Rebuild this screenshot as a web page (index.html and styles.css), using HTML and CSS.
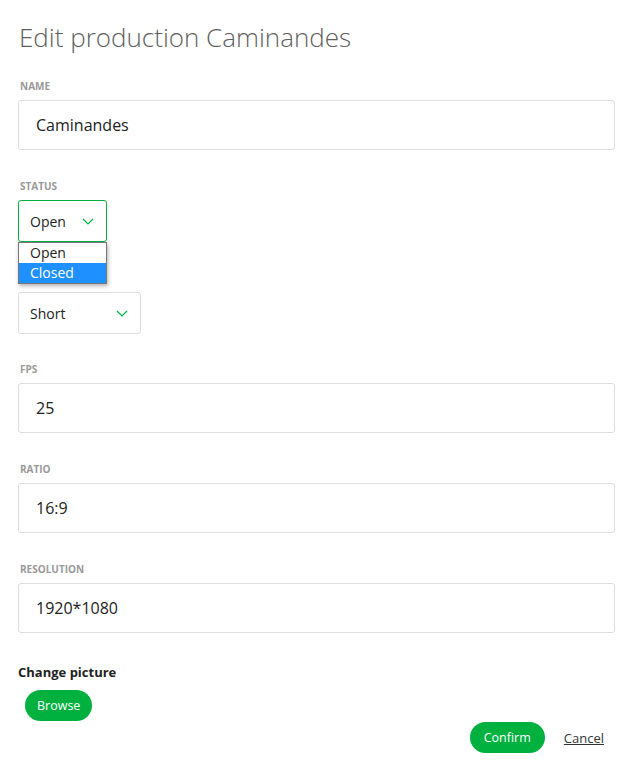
FILE: index.html
```html
<!DOCTYPE html>
<html>
<head>
	<title>Edit production</title>
	<link rel="stylesheet" href="styles.css">
</head>
<body>

	<main class="edit-form">
		<h1>Edit production Caminandes</h1>

		<div class="field">
			<label>Name</label>
			<div class="input">Caminandes</div>
		</div>

		<div class="field">
			<label>Status</label>
			<div class="select select-status active">
				<span>Open</span>
				<svg class="chevron" width="12" height="7" viewBox="0 0 12 7"><path d="M1 1l5 5 5-5" fill="none" stroke="#00b140" stroke-width="1.2"/></svg>
				<ul class="options">
					<li>Open</li>
					<li class="selected">Closed</li>
				</ul>
			</div>
		</div>

		<div class="field">
			<label class="covered">Type</label>
			<div class="select select-type">
				<span>Short</span>
				<svg class="chevron" width="12" height="7" viewBox="0 0 12 7"><path d="M1 1l5 5 5-5" fill="none" stroke="#00b140" stroke-width="1.2"/></svg>
			</div>
		</div>

		<div class="field">
			<label>FPS</label>
			<div class="input">25</div>
		</div>

		<div class="field">
			<label>Ratio</label>
			<div class="input">16:9</div>
		</div>

		<div class="field">
			<label>Resolution</label>
			<div class="input">1920*1080</div>
		</div>

		<div class="picture">
			<p>Change picture</p>
			<button class="btn browse">Browse</button>
		</div>

		<div class="actions">
			<button class="btn confirm">Confirm</button>
			<a href="#" class="cancel">Cancel</a>
		</div>
	</main>

</body>
</html>
```

FILE: styles.css
```css
body {
	margin: 0;
	background-color: white;
	font-family: 'Open Sans', 'Noto Sans', sans-serif;
	color: #333;
}

.edit-form {
	padding: 17px 16px 0 18px;
}

.edit-form h1 {
	margin: 0 0 22px 1px;
	font-size: 26px;
	font-weight: 300;
	line-height: 40px;
	color: #5f5f5f;
}

.field {
	margin-bottom: 29px;
}

.field label {
	display: block;
	margin: 0 0 7px 2px;
	font-size: 10px;
	font-weight: 700;
	line-height: 14px;
	color: #999;
	text-transform: uppercase;
}

/* the open status menu lies over this label */
.field label.covered {
	visibility: hidden;
}

.input {
	height: 50px;
	box-sizing: border-box;
	padding: 0 17px;
	border: 1px solid #ddd;
	border-radius: 3px;
	font-size: 16px;
	line-height: 48px;
	color: #222;
}

.select {
	position: relative;
	display: flex;
	align-items: center;
	justify-content: space-between;
	height: 42px;
	box-sizing: border-box;
	padding: 0 12px 0 11px;
	border: 1px solid #ddd;
	border-radius: 3px;
	font-size: 14px;
	color: #222;
}

.select.active {
	border-color: #00b140;
}

.select-status {
	width: 89px;
}

.select-type {
	width: 123px;
	margin-bottom: -1px;
}

.select .options {
	position: absolute;
	top: 41px;
	left: -1px;
	z-index: 2;
	width: 89px;
	margin: 0;
	padding: 0;
	box-sizing: border-box;
	list-style: none;
	background: white;
	border: 1px solid #767676;
	box-shadow: 1px 2px 4px rgba(0, 0, 0, .3);
}

.select .options li {
	height: 20px;
	padding-left: 11px;
	line-height: 20px;
	font-size: 14px;
}

.select .options li.selected {
	background-color: #1e90ff;
	color: white;
}

.picture p {
	margin: 0 0 8px 0;
	font-size: 13px;
	font-weight: 700;
	line-height: 20px;
	color: #222;
}

.btn {
	height: 31px;
	padding: 0 12px;
	border: 0;
	border-radius: 16px;
	background-color: #00b140;
	color: white;
	font-family: inherit;
	font-size: 12.5px;
	cursor: pointer;
}

.browse {
	margin-left: 7px;
}

.confirm {
	padding: 0 14px;
}

.actions {
	display: flex;
	align-items: center;
	justify-content: flex-end;
	gap: 19px;
	margin-top: 1px;
	padding-right: 11px;
}

.cancel {
	font-size: 13px;
	color: #333;
}
```
